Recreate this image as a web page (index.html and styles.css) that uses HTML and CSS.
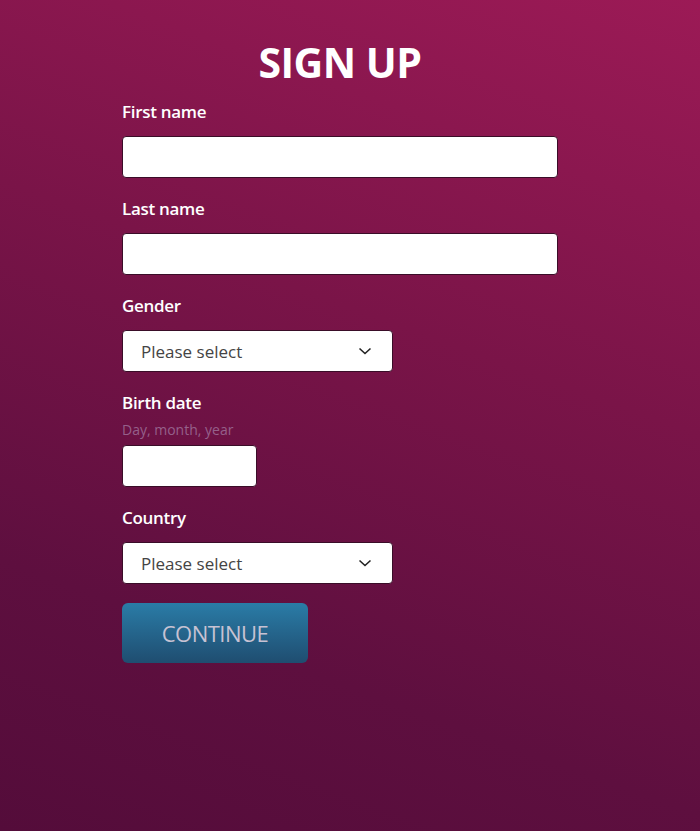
FILE: index.html
```html
<!DOCTYPE html>
<html lang="en">
<head>
  <meta charset="UTF-8">
  <meta name="viewport" content="width=device-width, initial-scale=1.0">
  <title>Sign Up</title>
  <link rel="stylesheet" href="styles.css">
</head>
<body>

<div id="signupContainer">
  <h1>SIGN UP</h1>

  <form id="signupForm">
    <div class="field">
      <label for="firstName">First name</label>
      <input type="text" id="firstName" class="text-input wide">
    </div>

    <div class="field">
      <label for="lastName">Last name</label>
      <input type="text" id="lastName" class="text-input wide">
    </div>

    <div class="field">
      <label for="gender">Gender</label>
      <div class="select-box">
        <span>Please select</span>
        <svg width="14" height="8" viewBox="0 0 14 8"><path d="M1.5 1.5 L7 6.5 L12.5 1.5" fill="none" stroke="#222" stroke-width="1.6"/></svg>
      </div>
    </div>

    <div class="field">
      <label for="birthDate" class="with-hint">Birth date</label>
      <p class="hint">Day, month, year</p>
      <input type="text" id="birthDate" class="text-input short">
    </div>

    <div class="field">
      <label for="country">Country</label>
      <div class="select-box">
        <span>Please select</span>
        <svg width="14" height="8" viewBox="0 0 14 8"><path d="M1.5 1.5 L7 6.5 L12.5 1.5" fill="none" stroke="#222" stroke-width="1.6"/></svg>
      </div>
    </div>

    <button type="button" class="continue-btn">CONTINUE</button>
  </form>
</div>

</body>
</html>
```

FILE: styles.css
```css
html, body {
  height: 100%;
}

body {
  margin: 0;
  font-family: "Open Sans", Arial, sans-serif;
  color: #fff;
  background: linear-gradient(200deg, #9c1a56 0%, #7a1448 40%, #5e0f3f 75%, #540c3a 100%);
}

#signupContainer {
  width: 436px;
  margin-left: 122px;
  padding-top: 34px;
}

h1 {
  margin: 0 0 10px;
  font-size: 41px;
  line-height: 56px;
  font-weight: 700;
  text-align: center;
  letter-spacing: -0.5px;
}

.field {
  margin-bottom: 19px;
}

label {
  display: block;
  font-size: 17px;
  line-height: 24px;
  font-weight: 600;
  letter-spacing: -0.3px;
  margin-bottom: 12px;
}

label.with-hint {
  margin-bottom: 5px;
}

.hint {
  margin: 0 0 5px;
  font-size: 14px;
  line-height: 20px;
  color: #95608a;
}

.text-input {
  display: block;
  box-sizing: border-box;
  height: 42px;
  border: 1px solid #3a0d28;
  border-radius: 4px;
  background: #fff;
}

.wide {
  width: 436px;
}

.short {
  width: 135px;
}

.select-box {
  box-sizing: border-box;
  width: 271px;
  height: 42px;
  display: flex;
  align-items: center;
  justify-content: space-between;
  padding: 0 20px 0 18px;
  background: #fff;
  border: 1px solid #3a0d28;
  border-radius: 4px;
  color: #444;
  font-size: 17px;
}

.continue-btn {
  display: block;
  width: 186px;
  height: 60px;
  margin-top: 0;
  border: none;
  border-radius: 6px;
  background: linear-gradient(#2a7ca7, #1f4d70);
  color: #c7c2d3;
  font-family: "Open Sans", Arial, sans-serif;
  font-size: 22px;
  letter-spacing: -0.5px;
}
```
